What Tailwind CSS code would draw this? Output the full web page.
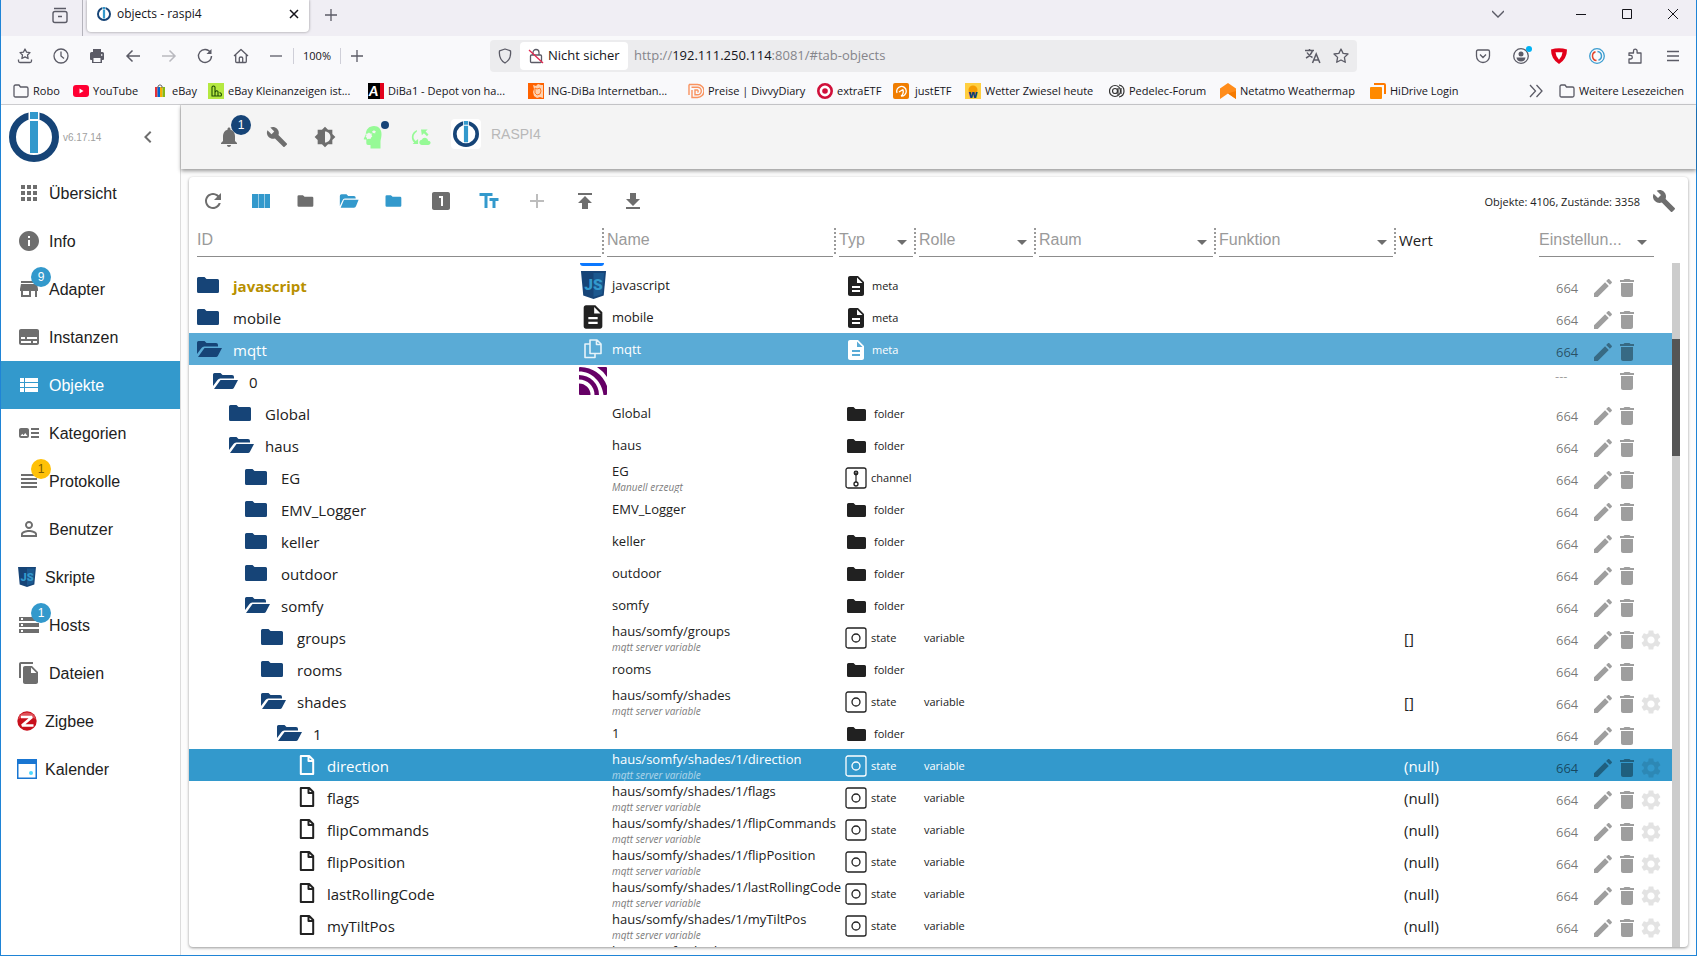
<!DOCTYPE html>
<html lang="de">
<head>
    <meta charset="UTF-8">
    <meta name="viewport" content="width=device-width, initial-scale=1.0">
    <title>objects - raspi4</title>
    <script src="https://cdn.jsdelivr.net/npm/@tailwindcss/browser@4"></script>
</head>
<body class="h-screen overflow-hidden bg-white font-['Open_Sans','Noto_Sans',sans-serif] text-[#212121]">
    <!-- icon sprite -->
    <svg class="hidden" xmlns="http://www.w3.org/2000/svg">
        <symbol id="i-refresh" viewBox="0 0 24 24"><path d="M17.65 6.35C16.2 4.9 14.21 4 12 4c-4.42 0-7.99 3.58-7.99 8s3.57 8 7.99 8c3.73 0 6.84-2.55 7.73-6h-2.08c-.82 2.33-3.04 4-5.65 4-3.31 0-6-2.69-6-6s2.69-6 6-6c1.66 0 3.14.69 4.22 1.78L13 11h7V4l-2.35 2.35z"/></symbol>
        <symbol id="i-columns" viewBox="0 0 24 24"><path d="M9 19h6V5H9.500v14zM3 19h6V5H3v14zM15.500 5v14H21V5h-5.500z"/></symbol>
        <symbol id="i-folder" viewBox="0 0 24 24"><path d="M10 4H4c-1.100 0-1.990.9-1.990 2L2 18c0 1.100.9 2 2 2h16c1.100 0 2-.9 2-2V8c0-1.100-.9-2-2-2h-8l-2-2z"/></symbol>
        <symbol id="i-folder-open" viewBox="0 0 24 24"><path d="M1 18V6q0-2 2-2h6l2 2h7q2 0 2 2v1H7Q5 9 4.300 11zM6 10.500h17.500l-3 7.500q-.7 2-2.500 2H2z"/></symbol>
        <symbol id="i-one" viewBox="0 0 24 24"><path d="M19 3H5c-1.100 0-2 .9-2 2v14c0 1.100.9 2 2 2h14c1.100 0 2-.9 2-2V5c0-1.100-.9-2-2-2zm-5 14h-2V9h-2V7h4v10z"/></symbol>
        <symbol id="i-text" viewBox="0 0 24 24"><path d="M2.500 4v3h5v12h3V7h5V4h-13zm19 5h-9v3h3v7h3v-7h3V9z"/></symbol>
        <symbol id="i-add" viewBox="0 0 24 24"><path d="M19 13h-6v6h-2v-6H5v-2h6V5h2v6h6v2z"/></symbol>
        <symbol id="i-publish" viewBox="0 0 24 24"><path d="M5 4v2h14V4H5zm0 10h4v6h6v-6h4l-7-7-7 7z"/></symbol>
        <symbol id="i-download" viewBox="0 0 24 24"><path d="M19 10h-4V4H9v6H5l7 7 7-7zM5 18v2h14v-2H5z"/></symbol>
        <symbol id="i-build" viewBox="0 0 24 24"><path d="M22.700 19l-9.100-9.100c.9-2.300.4-5-1.500-6.900-2-2-5-2.400-7.400-1.300L9 6 6 9 1.600 4.700C.4 7.100.9 10.100 2.900 12.100c1.900 1.900 4.600 2.400 6.900 1.500l9.100 9.100c.4.4 1 .4 1.400 0l2.300-2.300c.5-.4.5-1.100.1-1.400z"/></symbol>
        <symbol id="i-bell" viewBox="0 0 24 24"><path d="M12 22c1.100 0 2-.9 2-2h-4c0 1.100.89 2 2 2zm6-6v-5c0-3.070-1.640-5.640-4.500-6.320V4c0-.83-.67-1.500-1.500-1.500s-1.500.67-1.500 1.500v.68C7.630 5.360 6 7.920 6 11v5l-2 2v1h16v-1l-2-2z"/></symbol>
        <symbol id="i-brightness" viewBox="0 0 24 24"><path d="M20 8.690V4h-4.690L12 .69 8.690 4H4v4.690L.69 12 4 15.310V20h4.690L12 23.310 15.310 20H20v-4.690L23.310 12 20 8.690zM12 18V6c3.310 0 6 2.690 6 6s-2.690 6-6 6z"/></symbol>
        <symbol id="i-head" viewBox="0 0 24 24"><path fill-rule="evenodd" d="M13 1c4.600 0 7.500 3.300 7.500 8 0 3.400-.8 5.600-1 7v7.500H9.500V20H7q-1.700 0-1.700-1.700V14.500H3.300q-.9 0-.4-1l1.900-4C4.800 4.500 8 1 13 1zM8 7.500l-1.200 1.100-1.700.2.300 1.900-.9 1.100 1.300 1 .4 1.400 1.700-.4 1.600.3.600-1.600 1.200-1.100-.7-1.200.1-1.600-1.600-.2zM13 5l-.8 1-1.200.2.600 1v1.100l1.300-.3 1.300.4.100-1.200.7-.9-1.200-.4z"/></symbol>
        <symbol id="i-cloud-sync" viewBox="0 0 24 24"><path d="M20.500 16.500C20.100 14 18.200 13 16.600 13c-1.700 0-3 .9-3.600 2.400-2 .2-3 1.600-3 3.100 0 1.900 1.400 3 3.200 3h7.300c1.700 0 3-1 3-2.500 0-1.400-1.300-2.500-3-2.500z"/><path d="M7 3.500C3.500 5 1 8 1 12c0 3 1 5 2.800 6.700L2 20.500h6.500V14.500l-2.900 2.300C4.300 15.700 3 14 3 12c0-2.600 1.800-5 4-6.300z"/><path d="M12 3h8L17.500 5.500l3.500 3.500L19.200 11 15.500 7.400 13 10z"/></symbol>
        <symbol id="i-apps" viewBox="0 0 24 24"><path d="M4 8h4V4H4v4zm6 12h4v-4h-4v4zm-6 0h4v-4H4v4zm0-6h4v-4H4v4zm6 0h4v-4h-4v4zm6-10v4h4V4h-4zm-6 4h4V4h-4v4zm6 6h4v-4h-4v4zm0 6h4v-4h-4v4z"/></symbol>
        <symbol id="i-info" viewBox="0 0 24 24"><path d="M12 2C6.480 2 2 6.480 2 12s4.480 10 10 10 10-4.480 10-10S17.520 2 12 2zm1 15h-2v-6h2v6zm0-8h-2V7h2v2z"/></symbol>
        <symbol id="i-store" viewBox="0 0 24 24"><path d="M20 4H4v2h16V4zm1 10v-2l-1-5H4l-1 5v2h1v6h10v-6h4v6h2v-6h1zm-9 4H6v-4h6v4z"/></symbol>
        <symbol id="i-subtitles" viewBox="0 0 24 24"><path d="M20 4H4c-1.100 0-2 .9-2 2v12c0 1.100.9 2 2 2h16c1.100 0 2-.9 2-2V6c0-1.100-.9-2-2-2zM4 12h4v2H4v-2zm10 6H4v-2h10v2zm6 0h-4v-2h4v2zm0-4H10v-2h10v2z"/></symbol>
        <symbol id="i-list" viewBox="0 0 24 24"><path d="M3 14h4v-4H3v4zm0 5h4v-4H3v4zM3 9h4V5H3v4zm5 5h13v-4H8v4zm0 5h13v-4H8v4zM8 5v4h13V5H8z"/></symbol>
        <symbol id="i-track" viewBox="0 0 24 24"><path d="M22 13h-8v-2h8v2zm0-6h-8v2h8V7zm-8 10h8v-2h-8v2zm-2-8v6c0 1.100-.9 2-2 2H4c-1.100 0-2-.9-2-2V9c0-1.100.9-2 2-2h6c1.100 0 2 .9 2 2zm-1.500 6l-2.250-3-1.750 2.260-1.250-1.510L3.500 15h7z"/></symbol>
        <symbol id="i-lines" viewBox="0 0 24 24"><path d="M4 15h16v-2H4v2zm0 4h16v-2H4v2zm0-8h16V9H4v2zm0-6v2h16V5H4z"/></symbol>
        <symbol id="i-person" viewBox="0 0 24 24"><path d="M12 5.900a2.100 2.100 0 1 1 0 4.200 2.100 2.100 0 0 1 0-4.200m0 9c2.970 0 6.100 1.460 6.100 2.100v1.100H5.900V17c0-.64 3.130-2.100 6.100-2.100M12 4C9.790 4 8 5.790 8 8s1.790 4 4 4 4-1.790 4-4-1.790-4-4-4zm0 9c-2.670 0-8 1.340-8 4v3h16v-3c0-2.660-5.330-4-8-4z"/></symbol>
        <symbol id="i-storage" viewBox="0 0 24 24"><path d="M2 20h20v-4H2v4zm2-3h2v2H4v-2zM2 4v4h20V4H2zm4 3H4V5h2v2zm-4 7h20v-4H2v4zm2-3h2v2H4v-2z"/></symbol>
        <symbol id="i-files" viewBox="0 0 24 24"><path d="M16 1H4c-1.100 0-2 .9-2 2v14h2V3h12V1zm-1 4l6 6v10c0 1.100-.9 2-2 2H7.990C6.890 23 6 22.100 6 21l.01-14c0-1.100.89-2 1.990-2h7zm-1 7h5.500L14 6.500V12z"/></symbol>
        <symbol id="i-js" viewBox="0 0 26 29"><path fill="#164477" d="M0 0h26l-2.400 25.500L13 29 2.400 25.500z"/><path fill="#1b588f" d="M13 2h11l-2 22-9 3z"/><text x="13" y="20" text-anchor="middle" font-family="Roboto, sans-serif" font-weight="900" font-size="16" fill="#3399cc">JS</text></symbol>
        <symbol id="i-zigbee" viewBox="0 0 20 20"><circle cx="10" cy="10" r="9.700" fill="#c8101c"/><path d="M1 8A9.500 9.500 0 0 1 19 8Q10 3 1 8z" fill="#e0525a"/><path d="M4 6h11L5 14.500h11.500" fill="none" stroke="#fff" stroke-width="2.600" stroke-linejoin="bevel"/></symbol>
        <symbol id="i-calendar" viewBox="0 0 20 20"><path fill="#1976d2" d="M0 0h20v20H0z"/><path fill="#fff" d="M1.500 5h17v13.500h-17z"/><circle cx="14" cy="14" r="2" fill="#4dd8ff"/></symbol>
        <symbol id="i-chevron" viewBox="0 0 24 24"><path d="M15.410 7.410L14 6l-6 6 6 6 1.410-1.410L10.830 12z"/></symbol>
        <symbol id="i-edit" viewBox="0 0 24 24"><path d="M3 17.250V21h3.750L17.810 9.940l-3.750-3.750L3 17.250zM20.710 7.040c.39-.39.39-1.020 0-1.410l-2.340-2.340c-.39-.39-1.020-.39-1.410 0l-1.830 1.830 3.750 3.750 1.830-1.830z"/></symbol>
        <symbol id="i-delete" viewBox="0 0 24 24"><path d="M6 19c0 1.100.9 2 2 2h8c1.100 0 2-.9 2-2V7H6v12zM19 4h-3.500l-1-1h-5l-1 1H5v2h14V4z"/></symbol>
        <symbol id="i-settings" viewBox="0 0 24 24"><path d="M19.140 12.940c.04-.3.06-.61.06-.94 0-.32-.02-.64-.07-.94l2.030-1.580c.18-.14.23-.41.12-.61l-1.920-3.320c-.12-.22-.37-.29-.59-.22l-2.390.96c-.5-.38-1.030-.7-1.620-.94l-.36-2.540c-.04-.24-.24-.41-.48-.41h-3.840c-.24 0-.43.17-.47.41l-.36 2.540c-.59.24-1.130.57-1.620.94l-2.390-.96c-.22-.08-.47 0-.59.22L2.740 8.870c-.12.21-.08.47.12.61l2.030 1.580c-.05.3-.09.63-.09.94s.02.64.07.94l-2.030 1.580c-.18.14-.23.41-.12.61l1.920 3.320c.12.22.37.29.59.22l2.390-.96c.5.38 1.030.7 1.620.94l.36 2.540c.05.24.24.41.48.41h3.840c.24 0 .44-.17.47-.41l.36-2.540c.59-.24 1.130-.56 1.620-.94l2.390.96c.22.08.47 0 .59-.22l1.920-3.320c.12-.22.07-.47-.12-.61l-2.010-1.580zM12 15.600c-1.980 0-3.600-1.620-3.600-3.600s1.620-3.600 3.600-3.600 3.600 1.620 3.600 3.600-1.620 3.600-3.600 3.600z"/></symbol>
        <symbol id="i-doc" viewBox="0 0 24 24"><path d="M14 2H6c-1.100 0-1.990.9-1.990 2L4 20c0 1.100.89 2 1.990 2H18c1.100 0 2-.9 2-2V8l-6-6zm2 16H8v-2h8v2zm0-4H8v-2h8v2zm-3-5V3.500L18.500 9H13z"/></symbol>
        <symbol id="i-small-folder" viewBox="0 0 24 24"><path d="M9.500 5H4.500Q3 5 3 6.500v11Q3 19 4.500 19h16q1.500 0 1.500-1.500V8.500Q22 7 20.500 7H11.500z"/></symbol>
        <symbol id="i-drop" viewBox="0 0 24 24"><path d="M7 10l5 5 5-5z"/></symbol>
        <symbol id="i-copy" viewBox="0 0 20 22"><path d="M7 2h7l4 4v9.500H7zM13.500 2v4.500H18M7 6H2v13.500h10v-4" fill="none" stroke="currentColor" stroke-width="1.600" stroke-linejoin="round" opacity=".85"/></symbol>
        <symbol id="i-file" viewBox="0 0 16 20"><path d="M1.800 1h8.400L14.200 5v14H1.800zM9.500 1v5h5" fill="none" stroke="currentColor" stroke-width="2" stroke-linejoin="round"/></symbol>
        <symbol id="i-tree" viewBox="0 0 26 18"><path d="M0 2.500Q0 1 1.500 1H7.500l2 2h11Q22 3 22 4.500v11Q22 17 20.500 17h-19Q0 17 0 15.500z"/></symbol>
        <symbol id="i-tree-open" viewBox="0 0 26 18"><path d="M0 14V2.500Q0 1 1.500 1H7.500l2 2H19q2 0 2 2v1.500H7.200Q5.500 6.500 4.500 8zM7.500 8H25l-4.200 8q-.6 1-1.800 1H1z"/></symbol>
        <symbol id="i-mqtt" viewBox="0 0 28 28"><path fill="#606" d="M0 16.500A11.500 11.500 0 0 1 11.500 28H1q-1 0-1-1zM0 8a20 20 0 0 1 20 20h-4.500A15.500 15.500 0 0 0 0 12.500zM0 1q0-1 1-1 20 1 27 19v8q0 1-1 1h-2.500C23 15 13 4.500 0 4.500zM18 0h9q1 0 1 1v9q-4-6-10-10z"/></symbol>
        <symbol id="i-state" viewBox="0 0 22 22"><rect x="1" y="1" width="20" height="20" rx="2" fill="none" stroke="currentColor" stroke-width="1.300"/><circle cx="11" cy="11" r="4" fill="none" stroke="currentColor" stroke-width="1.300"/></symbol>
        <symbol id="i-channel" viewBox="0 0 22 22"><rect x="1" y="1" width="20" height="20" rx="2" fill="none" stroke="currentColor" stroke-width="1.300"/><circle cx="11" cy="6" r="1.800" fill="#777" stroke="currentColor" stroke-width="1.300"/><circle cx="11" cy="17" r="2" fill="none" stroke="currentColor" stroke-width="1.300"/><path d="M11 6v9" stroke="currentColor" stroke-width="1.200"/></symbol>
        <symbol id="i-logo" viewBox="0 0 50 50"><circle cx="25" cy="25" r="21.500" fill="none" stroke="#164477" stroke-width="7"/><path fill="#fff" d="M19.500 0h11v42h-11z"/><path fill="#3399cc" d="M21 0h8v7h-8zM21 9h8v32h-8z"/></symbol>
        <symbol id="i-bookmark-folder" viewBox="0 0 16 16"><path d="M1 3.500Q1 2 2.500 2H6l1.500 2h6Q15 4 15 5.500v7q0 1.500-1.500 1.500h-11Q1 14 1 12.500z" fill="none" stroke="#5b5b66" stroke-width="1.300"/></symbol>
    </svg>

    <div class="flex h-full flex-col border-x border-b border-[#1f84d6]">
        <!-- tab strip -->
        <div class="flex h-9 shrink-0 bg-[#f0eef4] text-[#5b5b66]">
            <div class="flex w-[82px] items-center justify-end border-r border-[#b4b3bb] pr-3 pb-1.5">
                <svg class="size-5" viewBox="0 0 20 20" fill="none" stroke="currentColor" stroke-width="1.400"><rect x="3" y="6.500" width="14" height="11" rx="2"/><path d="M4 3.500h12M8 11.500h4"/></svg>
            </div>
            <div class="ml-1 flex h-8 w-[222px] items-center rounded-b bg-white px-2.5 pb-1 shadow-[0_0_3px_rgba(0,0,0,0.4)]">
                <svg class="size-3.5"><use href="#i-logo"/></svg>
                <span class="ml-1.5 flex-1 text-xs text-[#15141a]">objects - raspi4</span>
                <button aria-label="Tab schließen" class="text-[#15141a]"><svg class="size-2.5" viewBox="0 0 10 10" stroke="currentColor" stroke-width="1.500"><path d="M1 1l8 8M9 1l-8 8"/></svg></button>
            </div>
            <button aria-label="Neuer Tab" class="ml-4 pb-1.5"><svg class="size-3" viewBox="0 0 12 12" stroke="currentColor" stroke-width="1.300"><path d="M0 6h12M6 0v12"/></svg></button>
            <div class="ml-auto flex items-center pb-2 text-[#15141a]">
                <button aria-label="Tabs auflisten" class="mr-9 flex w-12 justify-center text-[#5b5b66]"><svg class="size-3" viewBox="0 0 12 12" fill="none" stroke="currentColor" stroke-width="1.400"><path d="M0 3l6 6 6-6"/></svg></button>
                <button aria-label="Minimieren" class="flex w-[46px] justify-center"><svg class="size-2.5" viewBox="0 0 10 10" stroke="currentColor"><path d="M0 5.500h10"/></svg></button>
                <button aria-label="Maximieren" class="flex w-[46px] justify-center"><svg class="size-2.5" viewBox="0 0 10 10" fill="none" stroke="currentColor"><path d="M.5.5h9v9h-9z"/></svg></button>
                <button aria-label="Schließen" class="flex w-[46px] justify-center"><svg class="size-2.5" viewBox="0 0 10 10" stroke="currentColor"><path d="M0 0l10 10M10 0L0 10"/></svg></button>
            </div>
        </div>

        <!-- address bar -->
        <div class="flex h-10 shrink-0 items-center bg-[#f9f9fb] text-[#5b5b66]">
            <div class="ml-1.5 flex items-center">
                <button aria-label="Lesezeichen" class="flex w-9 justify-center"><svg class="size-4" viewBox="0 0 16 16" fill="none" stroke="currentColor" stroke-width="1.300" stroke-linejoin="round"><path d="M8 1l1.600 3.200 3.400.4-2.500 2.400.6 3.500L8 8.900l-3.100 1.600.6-3.500L3 4.600l3.400-.4zM1.500 11.500v1.500q0 1.500 1.500 1.500h10q1.500 0 1.500-1.500v-1.500"/></svg></button>
                <button aria-label="Chronik" class="flex w-9 justify-center"><svg class="size-4" viewBox="0 0 16 16" fill="none" stroke="currentColor" stroke-width="1.300"><circle cx="8" cy="8" r="7"/><path d="M8 3.500V8l3 2.500"/></svg></button>
                <button aria-label="Drucken" class="flex w-9 justify-center"><svg class="size-4" viewBox="0 0 16 16" fill="currentColor"><path d="M4 1h8v3h1.500Q15 4 15 5.500V11q0 1-1 1h-1v3H3v-3H2q-1 0-1-1V5.500Q1 4 2.500 4H4zm.5 9v4h7v-4zM12 6.300v1.400h1.400V6.300z"/></svg></button>
                <button aria-label="Zurück" class="flex w-9 justify-center"><svg class="size-4" viewBox="0 0 16 16" fill="none" stroke="currentColor" stroke-width="1.500"><path d="M15 8H2M7.500 2.500L2 8l5.500 5.500"/></svg></button>
                <button aria-label="Vor" disabled class="flex w-9 justify-center text-[#b9b9bf]"><svg class="size-4" viewBox="0 0 16 16" fill="none" stroke="currentColor" stroke-width="1.500"><path d="M1 8h13M8.500 2.500L14 8l-5.500 5.500"/></svg></button>
                <button aria-label="Neu laden" class="flex w-9 justify-center"><svg class="size-4" viewBox="0 0 16 16" fill="none" stroke="currentColor" stroke-width="1.400"><path d="M13.500 4.500A6.500 6.500 0 1 0 14.500 8"/><path d="M14.500 1v5H9.500z" fill="currentColor" stroke="none"/></svg></button>
                <button aria-label="Startseite" class="flex w-9 justify-center"><svg class="size-4" viewBox="0 0 16 16" fill="none" stroke="currentColor" stroke-width="1.300" stroke-linejoin="round"><path d="M1 8l7-6.500L15 8M2.700 6.500v7q0 1 1 1h8.600q1 0 1-1v-7M6.300 14.500V10q0-1 1.700-1t1.700 1v4.500"/></svg></button>
                <button aria-label="Verkleinern" class="flex w-[34px] justify-center"><svg class="size-3" viewBox="0 0 12 12" stroke="currentColor" stroke-width="1.300"><path d="M0 6h12"/></svg></button>
                <button class="h-4 w-12 border-x border-[#cfcfd8] text-[11px] leading-4 text-[#15141a]">100%</button>
                <button aria-label="Vergrößern" class="flex w-8 justify-center"><svg class="size-3" viewBox="0 0 12 12" stroke="currentColor" stroke-width="1.300"><path d="M0 6h12M6 0v12"/></svg></button>
            </div>
            <div class="ml-[117px] flex h-8 flex-1 items-center rounded bg-[#ececee] pr-2">
                <svg class="mx-[7px] size-4" viewBox="0 0 16 16" fill="none" stroke="currentColor" stroke-width="1.300"><path d="M8 1l5.500 1.800Q14.500 11 8 15 1.500 11 2.500 2.800z" stroke-linejoin="round"/></svg>
                <button class="flex h-7 w-[108px] items-center rounded-sm bg-white pl-2 text-[13px] text-[#15141a]">
                    <svg class="mr-1 size-4 shrink-0" viewBox="0 0 16 16" fill="none" stroke="#5b5b66" stroke-width="1.300"><rect x="2.500" y="7" width="11" height="7.500" rx="1"/><path d="M5 7V4.500a3 3 0 0 1 6 0V7"/><path d="M1 2l14 13" stroke="#e22850"/></svg>
                    <span class="whitespace-nowrap">Nicht sicher</span>
                </button>
                <span class="ml-1.5 flex-1 text-[13px] text-[#85858b]">http://<span class="text-[#15141a]">192.111.250.114</span>:8081/#tab-objects</span>
                <button aria-label="Übersetzen" class="mr-3"><svg class="size-4" viewBox="0 0 16 16" fill="none" stroke="currentColor" stroke-width="1.500"><path d="M0 2.500h9M4.500 1v1.500M7.500 2.500Q6 7.500 1 10M2 4.500Q4 8 7.500 9.500M7.500 15l3.700-9 3.700 9M9 12h4.500"/></svg></button>
                <button aria-label="Lesezeichen setzen"><svg class="size-4" viewBox="0 0 16 16" fill="none" stroke="currentColor" stroke-width="1.300" stroke-linejoin="round"><path d="M8 1l2.100 4.400 4.900.6-3.600 3.400.9 4.900L8 12l-4.300 2.300.9-4.900L1 6l4.900-.6z"/></svg></button>
            </div>
            <div class="ml-[107px] flex items-center pr-1">
                <button aria-label="Pocket" class="flex w-[38px] justify-center"><svg class="size-4" viewBox="0 0 16 16" fill="none" stroke="currentColor" stroke-width="1.300"><path d="M3 2h10q1.500 0 1.500 1.500V8a6.500 6.500 0 0 1-13 0V3.500Q1.500 2 3 2zM5 6.500l3 3 3-3"/></svg></button>
                <button aria-label="Konto" class="relative flex w-[38px] justify-center"><svg class="size-4" viewBox="0 0 16 16"><circle cx="8" cy="8" r="7.300" fill="none" stroke="currentColor" stroke-width="1.300"/><circle cx="8" cy="6" r="2.500" fill="currentColor"/><path d="M3.500 9.500h9q-.5 4-4.500 4t-4.500-4z" fill="currentColor"/></svg><span class="absolute -top-0.5 right-2 size-1.5 rounded-full bg-[#00b3f4]"></span></button>
                <button aria-label="Schutz" class="flex w-[38px] justify-center"><svg class="size-4" viewBox="0 0 16 16"><path d="M0 1.500Q8-1 16 1.500 16 11 8 16 0 11 0 1.500z" fill="#e2001a"/><path d="M4.500 4.300h7q-.3 4.500-3.500 7.400Q4.800 8.800 4.500 4.300z" fill="#fff"/></svg></button>
                <button aria-label="Erweiterung" class="flex w-[38px] justify-center"><svg class="size-4" viewBox="0 0 16 16" fill="none"><circle cx="8" cy="8" r="7.300" stroke="#3c9dd0" stroke-width="1.300"/><path d="M8.500 3.500a4.500 4.500 0 0 1 1 8.700" stroke="#3c9dd0" stroke-width="1.500"/><path d="M7.500 12.500a4.500 4.500 0 0 1-1-8.700" stroke="#e2452c" stroke-width="1.500"/></svg></button>
                <button aria-label="Add-ons" class="flex w-[38px] justify-center"><svg class="size-4" viewBox="0 0 16 16" fill="none" stroke="currentColor" stroke-width="1.300" stroke-linejoin="round"><path d="M2 15V11h1.500a1.800 1.800 0 0 0 0-3.600H2V5h4.500V3a1.800 1.800 0 0 1 3.600 0v2H14v10z"/></svg></button>
                <button aria-label="Menü" class="flex w-[38px] justify-center"><svg class="size-3.5" viewBox="0 0 14 14" stroke="currentColor" stroke-width="1.300"><path d="M1 2.500h12M1 7h12M1 11.500h12"/></svg></button>
            </div>
        </div>

        <!-- bookmarks -->
        <div class="flex h-[29px] shrink-0 items-center border-b border-[#cccccf] bg-[#f9f9fb] pt-0.5 pl-3 text-[11px] whitespace-nowrap text-[#15141a]">
            <a href="#" class="flex w-[60px] items-center gap-1"><svg class="size-4"><use href="#i-bookmark-folder"/></svg>Robo</a>
            <a href="#" class="flex w-[79px] items-center gap-1"><svg class="size-4" viewBox="0 0 16 16"><rect y="2" width="16" height="12" rx="3" fill="#f03"/><path d="M6.500 5.500v5l4-2.500z" fill="#fff"/></svg>YouTube</a>
            <a href="#" class="flex w-14 items-center gap-1"><svg class="size-4" viewBox="0 0 16 16"><path d="M3 4h2.500v10H3z" fill="#e53238"/><path d="M5.500 4H8v10H5.500z" fill="#0064d2"/><path d="M8 4h2.500v10H8z" fill="#f5af02"/><path d="M10.500 4H13v10h-2.500z" fill="#86b817"/><path d="M6 5V3q2-2.500 4 0v2" fill="none" stroke="#666"/></svg>eBay</a>
            <a href="#" class="flex w-40 items-center gap-1"><svg class="size-4" viewBox="0 0 16 16"><path fill="#b5e941" d="M0 0h16v16H0z"/><path d="M4 13V4q1.500-2 3 0v9zM7 9.500q1.500-3 3-1v4.500H7M10 13h3q1.500-2.500-1.500-3.500" fill="none" stroke="#1d4b00" stroke-width="1.100"/></svg>eBay Kleinanzeigen ist...</a>
            <a href="#" class="flex w-40 items-center gap-1"><svg class="size-4" viewBox="0 0 16 16"><path d="M0 0h13v16H0z"/><path fill="#e2001a" d="M12 0h4v16h-4z"/><text x="1" y="13" font-family="Lato, sans-serif" font-weight="900" font-style="italic" font-size="14" fill="#fff">A</text></svg>DiBa1 - Depot von ha...</a>
            <a href="#" class="flex w-40 items-center gap-1"><svg class="size-4" viewBox="0 0 16 16"><path fill="#ff6200" d="M0 0h16v16H0z"/><path d="M5 2l3 1 2-2 3 1 2 0v13l-3-1-3 1-3-2-1-4 1-3z" fill="#ffd2b0"/><path d="M7 5l2 1 3-1 1 3-1 3-3 1-2-2z" fill="none" stroke="#ff6200" stroke-width=".8"/></svg>ING-DiBa Internetban...</a>
            <a href="#" class="flex w-[129px] items-center gap-1"><svg class="size-4" viewBox="0 0 16 16" fill="none" stroke="#f9935f" stroke-width="1.400"><path d="M1 1.500h8.500a6.500 6.500 0 0 1 0 13H4V7M1 1.500V12M3.500 4.200h6a3.800 3.800 0 0 1 0 7.600H7V7h2.500a1.500 1.500 0 0 1 0 2.500"/></svg>Preise | DivvyDiary</a>
            <a href="#" class="flex w-19 items-center gap-1"><svg class="size-4" viewBox="0 0 16 16"><circle cx="8" cy="8" r="6.700" fill="#fff" stroke="#d0103a" stroke-width="2.600"/><circle cx="8" cy="8" r="2.800" fill="#d0103a"/></svg>extraETF</a>
            <a href="#" class="flex w-18 items-center gap-1.5"><svg class="size-4" viewBox="0 0 16 16"><rect width="16" height="16" rx="2" fill="#f07d00"/><path d="M4 10a4.800 4.800 0 1 1 4 3M8 13q3-2 2-6.500M10 6.500l-4 2.500" fill="none" stroke="#fff" stroke-width="1.300"/></svg>justETF</a>
            <a href="#" class="flex w-36 items-center gap-1"><svg class="size-4" viewBox="0 0 16 16"><path fill="#ffcf40" d="M0 0h16v16H0z"/><circle cx="8" cy="7" r="4.500" fill="#f59c00"/><text x="8" y="15" text-anchor="middle" font-family="Open Sans, sans-serif" font-weight="800" font-size="10" fill="#0c3c78">w</text></svg>Wetter Zwiesel heute</a>
            <a href="#" class="flex w-[111px] items-center gap-1"><svg class="size-4" viewBox="0 0 16 16" fill="none" stroke="#333" stroke-width="1.200"><circle cx="6" cy="8" r="5.500"/><circle cx="6" cy="8" r="2.500"/><path d="M10 2q5 1 5 6t-5 6M9 5v7M12 5v6"/></svg>Pedelec-Forum</a>
            <a href="#" class="flex w-[150px] items-center gap-1"><svg class="size-4" viewBox="0 0 16 16"><path fill="#ff8c1a" d="M8 0l8 5.500V16l-8-5.500L0 16V5.500z"/><path fill="#f57a00" d="M8 10.500L16 16V8z"/></svg>Netatmo Weathermap</a>
            <a href="#" class="flex items-center gap-1"><svg class="size-4" viewBox="0 0 16 16"><rect y="4" width="12" height="12" rx="1" fill="#ff8a00"/><path d="M4 0h10q2 0 2 2v9h-2V2H4z" fill="#ff7a00"/></svg>HiDrive Login</a>
            <button aria-label="Weitere Lesezeichen anzeigen" class="mr-4 ml-auto"><svg class="size-3.5" viewBox="0 0 14 14" fill="none" stroke="#5b5b66" stroke-width="1.300"><path d="M1 1l5.500 6L1 13M7.500 1l5.500 6-5.500 6"/></svg></button>
            <a href="#" class="mr-3 flex items-center gap-1"><svg class="size-4"><use href="#i-bookmark-folder"/></svg>Weitere Lesezeichen</a>
        </div>

        <div class="flex min-h-0 flex-1">
            <!-- sidebar -->
            <aside class="w-[180px] shrink-0 border-r border-[#dcdcdc] font-['Liberation_Sans',sans-serif]">
                <div class="flex h-16 items-center pr-5 pl-2">
                    <svg class="size-[50px]"><use href="#i-logo"/></svg>
                    <span class="ml-1 text-[10px] text-[#a0a0a0]">v6.17.14</span>
                    <button aria-label="Menü einklappen" class="ml-auto text-[#6e6e6e]"><svg class="size-6" fill="currentColor"><use href="#i-chevron"/></svg></button>
                </div>
                <nav id="menu"></nav>
            </aside>

            <main class="flex min-w-0 flex-1 flex-col bg-[#fcfcfc]">
                <header class="z-10 flex h-16 shrink-0 items-center bg-[#f4f4f4] pl-6 font-['Liberation_Sans',sans-serif] text-[#6e6e6e] shadow-[0_2px_4px_rgba(0,0,0,0.4)]">
                    <button aria-label="Benachrichtigungen" class="relative flex w-12 justify-center"><svg class="size-6" fill="currentColor"><use href="#i-bell"/></svg><span class="absolute -top-2.5 right-0.5 size-5 rounded-full bg-[#164477] text-xs leading-5 text-white">1</span></button>
                    <button aria-label="Systemeinstellungen" class="flex w-12 justify-center"><svg class="size-[22px]" fill="currentColor"><use href="#i-build"/></svg></button>
                    <button aria-label="Farbschema" class="flex w-12 justify-center"><svg class="size-[22px]" fill="currentColor"><use href="#i-brightness"/></svg></button>
                    <button aria-label="Expertenmodus" class="relative flex w-12 justify-center text-[#96fa96]"><svg class="size-6" fill="currentColor"><use href="#i-head"/></svg><span class="absolute -top-1 right-2 size-2 rounded-full bg-[#164477]"></span></button>
                    <button aria-label="Cloud" class="flex w-12 justify-center text-[#96fa96]"><svg class="size-5" fill="currentColor"><use href="#i-cloud-sync"/></svg></button>
                    <button class="ml-1.5 flex items-center gap-2.5 pb-1.5 text-sm text-[#b8b8b8]"><span class="flex size-[30px] items-center justify-center rounded-sm bg-white"><svg class="size-[26px]"><use href="#i-logo"/></svg></span>RASPI4</button>
                </header>

                <div class="min-h-0 flex-1 p-2">
                    <section class="flex h-full flex-col overflow-hidden rounded bg-white shadow-[0_1px_3px_rgba(0,0,0,0.4)]">
                        <div class="flex h-12 shrink-0 items-center text-[#6e6e6e]">
                            <button aria-label="Aktualisieren" class="flex w-12 justify-center"><svg class="size-6" fill="currentColor"><use href="#i-refresh"/></svg></button>
                            <button aria-label="Spalten" class="flex w-12 justify-center text-[#3399cc]"><svg class="size-6" fill="currentColor"><use href="#i-columns"/></svg></button>
                            <button aria-label="Alle zuklappen" class="flex w-11 justify-center pr-1"><svg class="size-5" fill="currentColor"><use href="#i-small-folder"/></svg></button>
                            <button aria-label="Alle aufklappen" class="flex w-11 justify-center pr-1 text-[#3399cc]"><svg class="size-5" fill="currentColor"><use href="#i-folder-open"/></svg></button>
                            <button aria-label="Ebene zuklappen" class="flex w-11 justify-center pr-1 text-[#3399cc]"><svg class="size-5" fill="currentColor"><use href="#i-small-folder"/></svg></button>
                            <button aria-label="Zustände zählen" class="flex w-12 justify-center"><svg class="size-6" fill="currentColor"><use href="#i-one"/></svg></button>
                            <button aria-label="Beschreibungen" class="flex w-12 justify-center text-[#3399cc]"><svg class="size-6" fill="currentColor"><use href="#i-text"/></svg></button>
                            <button aria-label="Objekt anlegen" disabled class="flex w-12 justify-center text-[#bdbdbd]"><svg class="size-6" fill="currentColor"><use href="#i-add"/></svg></button>
                            <button aria-label="Hochladen" class="flex w-12 justify-center"><svg class="size-6" fill="currentColor"><use href="#i-publish"/></svg></button>
                            <button aria-label="Herunterladen" class="flex w-12 justify-center"><svg class="size-6" fill="currentColor"><use href="#i-download"/></svg></button>
                            <span class="mr-3 ml-auto pt-0.5 text-[11px] text-[#212121]">Objekte: 4106, Zustände: 3358</span>
                            <button aria-label="Bearbeiten" class="mr-3"><svg class="size-6" fill="currentColor"><use href="#i-build"/></svg></button>
                        </div>

                        <!-- filters -->
                        <div id="filters" class="flex h-[38px] shrink-0 pt-[3px] pr-2 pl-2 font-['Liberation_Sans',sans-serif] text-base text-[#9a9a9a]">
                            <div class="h-[26px] flex-1 border-r-2 border-dotted border-[#9a9a9a] pr-px"><input aria-label="ID" placeholder="ID" class="h-[29px] w-full border-b border-[#8c8c8c] pb-1 outline-none placeholder:text-[#9a9a9a]"></div>
                            <div class="h-[26px] w-[232px] border-r-2 border-dotted border-[#9a9a9a] pr-px pl-[3px]"><input aria-label="Name" placeholder="Name" class="h-[29px] w-full border-b border-[#8c8c8c] pb-1 outline-none placeholder:text-[#9a9a9a]"></div>
                            <div class="relative h-[26px] w-20 border-r-2 border-dotted border-[#9a9a9a] pr-px pl-[3px]"><select aria-label="Typ" class="h-[29px] w-full appearance-none border-b border-[#8c8c8c] pb-1 outline-none"><option>Typ</option></select><svg class="pointer-events-none absolute top-0.5 right-0 size-6 fill-[#6e6e6e]"><use href="#i-drop"/></svg></div>
                            <div class="relative h-[26px] w-30 border-r-2 border-dotted border-[#9a9a9a] pr-px pl-[3px]"><select aria-label="Rolle" class="h-[29px] w-full appearance-none border-b border-[#8c8c8c] pb-1 outline-none"><option>Rolle</option></select><svg class="pointer-events-none absolute top-0.5 right-0 size-6 fill-[#6e6e6e]"><use href="#i-drop"/></svg></div>
                            <div class="relative h-[26px] w-45 border-r-2 border-dotted border-[#9a9a9a] pr-px pl-[3px]"><select aria-label="Raum" class="h-[29px] w-full appearance-none border-b border-[#8c8c8c] pb-1 outline-none"><option>Raum</option></select><svg class="pointer-events-none absolute top-0.5 right-0 size-6 fill-[#6e6e6e]"><use href="#i-drop"/></svg></div>
                            <div class="relative h-[26px] w-45 border-r-2 border-dotted border-[#9a9a9a] pr-px pl-[3px]"><select aria-label="Funktion" class="h-[29px] w-full appearance-none border-b border-[#8c8c8c] pb-1 outline-none"><option>Funktion</option></select><svg class="pointer-events-none absolute top-0.5 right-0 size-6 fill-[#6e6e6e]"><use href="#i-drop"/></svg></div>
                            <div class="h-[26px] w-[143px] pl-[3px] font-['Open_Sans',sans-serif] text-[15px] leading-6 text-[#212121]">Wert</div>
                            <div class="relative mr-[26px] h-[26px] w-[115px]"><select aria-label="Einstellungen" class="h-[29px] w-full appearance-none border-b border-[#8c8c8c] pb-1 outline-none"><option>Einstellun...</option></select><svg class="pointer-events-none absolute top-0.5 right-0 size-6 fill-[#6e6e6e]"><use href="#i-drop"/></svg></div>
                        </div>

                        <div class="flex min-h-0 flex-1 pr-2">
                            <div class="min-w-0 flex-1 overflow-hidden">
                                <table class="w-full table-fixed">
                                    <colgroup><col><col class="w-[236px]"><col class="w-20"><col class="w-30"><col class="w-45"><col class="w-45"><col class="w-[148px]"><col class="w-30"></colgroup>
                                    <tbody id="objects"></tbody>
                                </table>
                            </div>
                            <div class="w-2 bg-[#cccccc] pt-19"><div class="h-[117px] bg-[#555555]"></div></div>
                        </div>
                    </section>
                </div>
            </main>
        </div>
    </div>

    <script>
        const menu = [
            { icon: 'apps', text: 'Übersicht' },
            { icon: 'info', text: 'Info' },
            { icon: 'store', text: 'Adapter', badge: 9 },
            { icon: 'subtitles', text: 'Instanzen' },
            { icon: 'list', text: 'Objekte', active: true },
            { icon: 'track', text: 'Kategorien' },
            { icon: 'lines', text: 'Protokolle', badge: 1, warn: true },
            { icon: 'person', text: 'Benutzer' },
            { icon: 'js', text: 'Skripte', image: true },
            { icon: 'storage', text: 'Hosts', badge: 1 },
            { icon: 'files', text: 'Dateien' },
            { icon: 'zigbee', text: 'Zigbee', image: true },
            { icon: 'calendar', text: 'Kalender', image: true }
        ];

        document.getElementById('menu').innerHTML = menu.map(item => `
            <a href="#" class="flex h-12 items-center pl-4 ${item.active ? 'bg-[#3399cc] text-white' : ''}">
                <span class="relative ${item.active ? 'text-white' : 'text-[#6e6e6e]'}">
                    <svg class="${item.image ? 'size-5' : 'size-6'}" fill="currentColor"><use href="#i-${item.icon}"/></svg>
                    ${item.badge ? `<span class="absolute -top-2.5 -right-2.5 size-5 rounded-full text-center text-xs leading-5 ${item.warn ? 'bg-[#ffc107] text-[#7a5c00]' : 'bg-[#3399cc] text-white'}">${item.badge}</span>` : ''}
                </span>
                <span class="ml-2 pt-0.5">${item.text}</span>
            </a>`).join('');

        const shade = 'haus/somfy/shades/1/';
        const mqttVar = 'mqtt server variable';
        const objects = [
            { level: 0, id: 'javascript', name: 'javascript', type: 'meta', icon: 'js', bold: true },
            { level: 0, id: 'mobile', name: 'mobile', type: 'meta', icon: 'doc' },
            { level: 0, id: 'mqtt', name: 'mqtt', type: 'meta', icon: 'copy', open: true, mark: 'light' },
            { level: 1, id: '0', name: '', type: '', icon: 'mqtt', open: true },
            { level: 2, id: 'Global', name: 'Global', type: 'folder' },
            { level: 2, id: 'haus', name: 'haus', type: 'folder', open: true },
            { level: 3, id: 'EG', name: 'EG', desc: 'Manuell erzeugt', type: 'channel' },
            { level: 3, id: 'EMV_Logger', name: 'EMV_Logger', type: 'folder' },
            { level: 3, id: 'keller', name: 'keller', type: 'folder' },
            { level: 3, id: 'outdoor', name: 'outdoor', type: 'folder' },
            { level: 3, id: 'somfy', name: 'somfy', type: 'folder', open: true },
            { level: 4, id: 'groups', name: 'haus/somfy/groups', desc: mqttVar, type: 'state', value: '[]' },
            { level: 4, id: 'rooms', name: 'rooms', type: 'folder' },
            { level: 4, id: 'shades', name: 'haus/somfy/shades', desc: mqttVar, type: 'state', value: '[]', open: true },
            { level: 5, id: '1', name: '1', type: 'folder', open: true },
            { level: 6, id: 'direction', name: shade + 'direction', desc: mqttVar, type: 'state', value: '(null)', file: true, mark: 'full' },
            { level: 6, id: 'flags', name: shade + 'flags', desc: mqttVar, type: 'state', value: '(null)', file: true },
            { level: 6, id: 'flipCommands', name: shade + 'flipCommands', desc: mqttVar, type: 'state', value: '(null)', file: true },
            { level: 6, id: 'flipPosition', name: shade + 'flipPosition', desc: mqttVar, type: 'state', value: '(null)', file: true },
            { level: 6, id: 'lastRollingCode', name: shade + 'lastRollingCode', desc: mqttVar, type: 'state', value: '(null)', file: true },
            { level: 6, id: 'myTiltPos', name: shade + 'myTiltPos', desc: mqttVar, type: 'state', value: '(null)', file: true }
        ];

        const typeIcons = { meta: 'doc', folder: 'small-folder', channel: 'channel', state: 'state' };
        const nameIcons = {
            js: '<svg class="h-7 w-[27px]"><use href="#i-js"/></svg>',
            doc: '<svg class="size-7" fill="currentColor"><use href="#i-doc"/></svg>',
            copy: '<svg class="mr-1 h-[22px] w-5"><use href="#i-copy"/></svg>',
            mqtt: '<svg class="size-7"><use href="#i-mqtt"/></svg>'
        };
        const marks = { light: 'bg-[#5aabd6] text-white', full: 'bg-[#3399cc] text-white' };

        function treeIcon(o) {
            if (o.file) {
                return '<svg class="mr-3 ml-1.5 h-5 w-4"><use href="#i-file"/></svg>';
            }
            return `<svg class="mr-2.5 h-[18px] w-[26px] fill-[#164477]"><use href="#i-tree${o.open ? '-open' : ''}"/></svg>`;
        }

        function typeCell(o) {
            if (!o.type) {
                return '';
            }
            const framed = o.type === 'state' || o.type === 'channel';
            return `<div class="flex items-center ${o.type === 'folder' ? 'gap-1.5' : 'gap-1'}">
                <svg class="${framed ? 'ml-px size-[22px]' : 'size-6'}" fill="currentColor"><use href="#i-${typeIcons[o.type]}"/></svg>${o.type}
            </div>`;
        }

        function actions(o) {
            if (!o.type) {
                return `<div class="flex h-8 items-center text-black/38">
                    <span class="w-[63px] pb-2 pl-[3px] text-[13px]">---</span>
                    <button aria-label="Löschen"><svg class="size-6" fill="currentColor"><use href="#i-delete"/></svg></button>
                </div>`;
            }
            return `<div class="flex h-8 items-center pt-1.5 text-black/38">
                <span class="w-[39px] pt-0.5 pl-1 text-[13px] text-black/54">664</span>
                <button aria-label="Bearbeiten"><svg class="size-6" fill="currentColor"><use href="#i-edit"/></svg></button>
                <button aria-label="Löschen"><svg class="size-6" fill="currentColor"><use href="#i-delete"/></svg></button>
                ${o.value ? '<button aria-label="Einstellungen" class="text-black/11"><svg class="size-6" fill="currentColor"><use href="#i-settings"/></svg></button>' : ''}
            </div>`;
        }

        // rows scrolled almost out of view: only the bottom of one icon and the top of one name show
        const rowAbove = '<tr><td class="h-1.5 p-0"><div class="mr-1 ml-auto h-1.5 w-6"><div class="h-[3px] rounded-b bg-[#0a78ff]"></div></div></td></tr>';
        const rowBelow = `<tr class="h-8"><td></td><td class="p-0 pl-1 align-top text-[13px] leading-[21px]">${shade}myPos</td></tr>`;

        document.getElementById('objects').innerHTML = rowAbove + objects.map(o => `
            <tr class="h-8 ${marks[o.mark] || ''}">
                <td class="p-0 pr-px pl-2">
                    <div class="flex h-8 items-center" style="padding-left: ${o.level * 16}px">
                        ${treeIcon(o)}
                        <span class="flex-1 pt-0.5 text-[15px] ${o.bold ? 'font-bold text-[#b89000]' : ''}">${o.id}</span>
                        ${nameIcons[o.icon] || ''}
                    </div>
                </td>
                <td class="overflow-hidden p-0 pl-1 text-[13px] whitespace-nowrap">
                    ${o.desc
                        ? `<div class="h-8"><div class="leading-[21px]">${o.name}</div><div class="text-[10px] leading-[11px] italic opacity-60">${o.desc}</div></div>`
                        : `<div class="pt-0.5">${o.name}</div>`}
                </td>
                <td class="p-0 pt-0.5 text-[11px]">${typeCell(o)}</td>
                <td class="p-0 pt-0.5 text-[11px]">${o.value ? 'variable' : ''}</td>
                <td></td>
                <td></td>
                <td class="p-0 pt-0.5 text-[15px]">${o.value || ''}</td>
                <td class="p-0">${actions(o)}</td>
            </tr>`).join('') + rowBelow;
    </script>
</body>
</html>
